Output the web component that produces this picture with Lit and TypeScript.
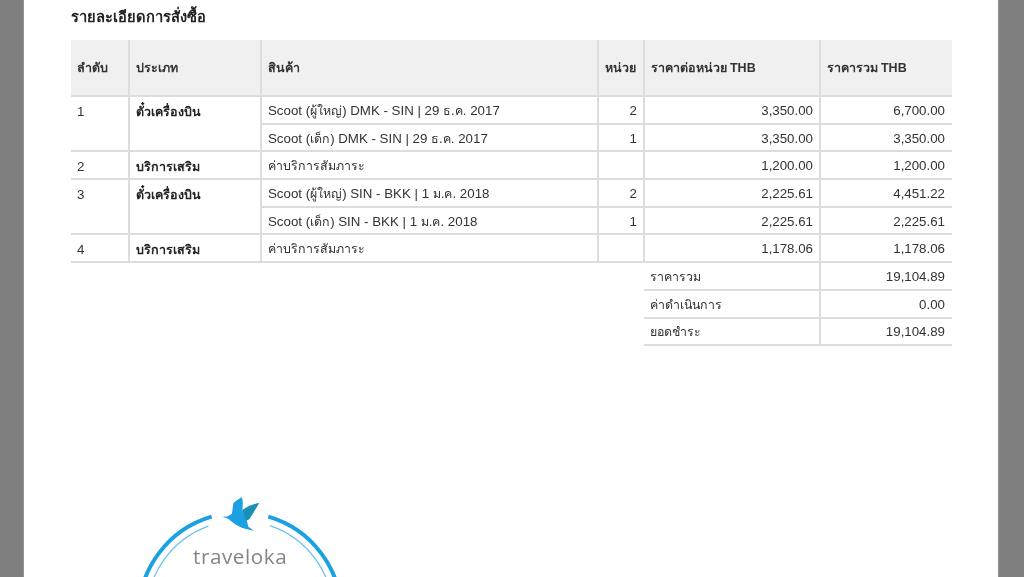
import { LitElement, html, css } from "lit";
import { customElement } from "lit/decorators.js";

type Row = { sub: string; qty: string; unit: string; total: string };
type Group = { no: string; type: string; rows: Row[] };

const groups: Group[] = [
  { no: "1", type: "ตั๋วเครื่องบิน", rows: [
    { sub: "Scoot (ผู้ใหญ่) DMK - SIN | 29 ธ.ค. 2017", qty: "2", unit: "3,350.00", total: "6,700.00" },
    { sub: "Scoot (เด็ก) DMK - SIN | 29 ธ.ค. 2017", qty: "1", unit: "3,350.00", total: "3,350.00" },
  ] },
  { no: "2", type: "บริการเสริม", rows: [
    { sub: "ค่าบริการสัมภาระ", qty: "", unit: "1,200.00", total: "1,200.00" },
  ] },
  { no: "3", type: "ตั๋วเครื่องบิน", rows: [
    { sub: "Scoot (ผู้ใหญ่) SIN - BKK | 1 ม.ค. 2018", qty: "2", unit: "2,225.61", total: "4,451.22" },
    { sub: "Scoot (เด็ก) SIN - BKK | 1 ม.ค. 2018", qty: "1", unit: "2,225.61", total: "2,225.61" },
  ] },
  { no: "4", type: "บริการเสริม", rows: [
    { sub: "ค่าบริการสัมภาระ", qty: "", unit: "1,178.06", total: "1,178.06" },
  ] },
];

const totals = [
  ["ราคารวม", "19,104.89"],
  ["ค่าดำเนินการ", "0.00"],
  ["ยอดชำระ", "19,104.89"],
];

const thai = (s: string) =>
  s.split(/([\u0E00-\u0E7F]+)/).map((p, i) => (i % 2 ? html`<span class="th">${p}</span>` : p));

@customElement("app-root")
export class AppRoot extends LitElement {
  static styles = css`
    :host { display: block; width: 1024px; height: 577px; overflow: hidden; background: #7f7f7f; }
    .sheet {
      box-sizing: border-box; width: 974px; height: 577px; margin-left: 24px; overflow: hidden;
      background: #fff; padding: 0 46px 0 47px; color: #333;
      font-family: "Liberation Sans", "Noto Sans", sans-serif;
      box-shadow: 0 0 1.5px #c8c8c8; filter: blur(0.45px);
    }
    h2 { margin: 0; height: 40px; box-sizing: border-box; padding-top: 8px; font-size: 14.7px; line-height: 18px; font-weight: 700; color: #222; }
    table { border-collapse: collapse; table-layout: fixed; width: 881px; font-size: 13.3px; }
    th, td { padding: 0 6px; box-sizing: border-box; }
    th { height: 56px; background: #f0f0f0; text-align: left; font-weight: 700; font-size: 12.5px; color: #333; border-left: 2px solid #ddd; border-bottom: 2px solid #ddd; padding-left: 5.5px; }
    td { height: 27.7px; padding-top: 1px; border-left: 2px solid #ddd; border-bottom: 2px solid #ddd; }
    th.first, td.first { border-left: 0; }
    td.top { vertical-align: top; padding-top: 7px; }
    td.b { font-weight: 700; font-size: 12.5px; color: #222; padding-top: 5px; }
    .r { text-align: right; }
    .end { padding-right: 7px; }
    .blank { border-left: 0; border-bottom: 0; }
    .label { border-left: 0; }
    .th { font-size: 12.4px; }
    .logo { display: block; margin: 134px 0 0 49px; width: 240px; height: 97px; }
    .logo text { font-family: "Open Sans", sans-serif; font-size: 62px; fill: #858585; letter-spacing: 1.7px; }
  `;

  render() {
    return html`<div class="sheet">
      <h2>รายละเอียดการสั่งซื้อ</h2>
      <table>
        <colgroup>
          <col style="width:58px" /><col style="width:132px" /><col style="width:337px" />
          <col style="width:46px" /><col style="width:176px" /><col style="width:132px" />
        </colgroup>
        <thead>
          <tr><th class="first">ลำดับ</th><th>ประเภท</th><th>สินค้า</th><th>หน่วย</th><th>ราคาต่อหน่วย THB</th><th>ราคารวม THB</th></tr>
        </thead>
        <tbody>
          ${groups.map((g) => g.rows.map((r, i) => html`<tr>
            ${i === 0 ? html`<td class="top first" rowspan=${g.rows.length}>${g.no}</td>
              <td class="top b" rowspan=${g.rows.length}>${g.type}</td>` : ""}
            <td>${thai(r.sub)}</td>
            <td class="r">${r.qty}</td>
            <td class="r">${r.unit}</td>
            <td class="r end">${r.total}</td>
          </tr>`))}
          ${totals.map(([l, v]) => html`<tr>
            <td class="blank first" colspan="4"></td>
            <td class="label">${thai(l)}</td>
            <td class="r end">${v}</td>
          </tr>`)}
        </tbody>
      </table>
      <svg class="logo" viewBox="0 0 720 291" aria-label="traveloka">
        <g fill="none" stroke="#1ba0e2">
          <path stroke-width="12" d="M275 110A304 304 0 0 0 56 402M445 110A304 304 0 0 1 664 402" />
          <path stroke="#6cc3ee" stroke-width="4" d="M265 138.6A280 280 0 0 0 80 402M450 137A280 280 0 0 1 640 402" />
        </g>
        <path fill="#1ba0e2" d="M307 110C320 112 330 108 336 100L340 70C348 62 358 56 366 52C370 66 368 80 367 90L380 120L385 140L402 152L375 146C350 138 335 125 325 116C318 113 312 113 307 110Z" />
        <path fill="#1a8fb8" d="M367 90C384 78 400 72 418 68C408 85 396 105 388 118L378 122Z" />
        <text x="219" y="252">traveloka</text>
      </svg>
    </div>`;
  }
}
